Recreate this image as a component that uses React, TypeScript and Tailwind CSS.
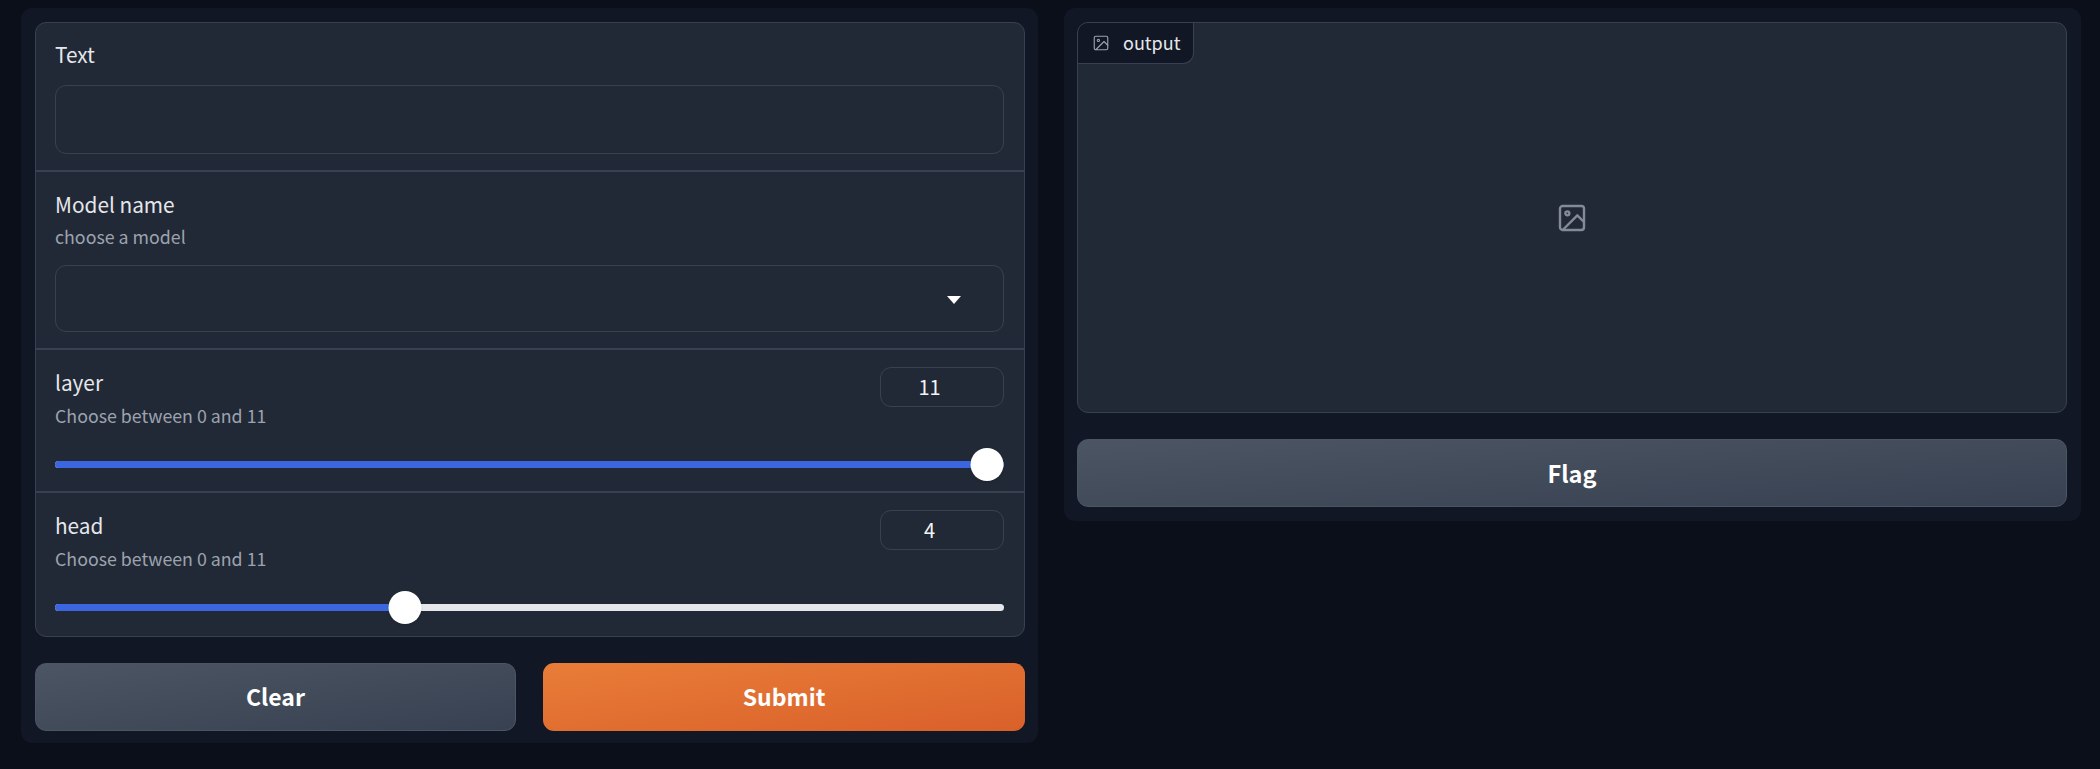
import React from "react";

const FONT = "font-['Noto_Sans_CJK_SC','Noto_Sans',sans-serif]";

const ImageIcon = ({ className, strokeWidth }: { className: string; strokeWidth: number }) => (
  <svg
    className={className}
    viewBox="0 0 24 24"
    fill="none"
    stroke="currentColor"
    strokeWidth={strokeWidth}
    strokeLinecap="round"
    strokeLinejoin="round"
  >
    <rect x="3" y="3" width="18" height="18" rx="2" ry="2" />
    <circle cx="8.5" cy="8.5" r="1.5" />
    <polyline points="21 15 16 10 5 21" />
  </svg>
);

const SliderRow = ({
  label,
  value,
  percent,
  height,
  border,
}: {
  label: string;
  value: number;
  percent: number;
  height: string;
  border: boolean;
}) => (
  <div className={`${height} ${border ? "border-b-2 border-[#374151]" : ""} pl-[19px] pr-[20px] pt-[17px]`}>
    <div className="flex justify-between">
      <div>
        <div className="text-[20.8px] leading-[30px] text-[#e5e7eb]">{label}</div>
        <div className="mt-[5px] text-[17.8px] leading-[26px] text-[#9ca3af]">
          Choose between 0 and 11
        </div>
      </div>
      <div className="flex h-[40px] w-[124px] items-center justify-center rounded-[11px] border border-[#374151] pr-[25px] text-[20px] text-[#f3f4f6]">
        {value}
      </div>
    </div>
    <div className="relative mt-[33px] h-[7px] rounded-full bg-[#e5e7eb]">
      <div className="h-full rounded-full bg-[#3b66e0]" style={{ width: `${percent}%` }} />
      <div
        className="absolute top-[-13px] h-[33px] w-[33px] -translate-x-1/2 rounded-full bg-white shadow"
        style={{ left: `calc(16px + (100% - 33px) * ${percent / 100})` }}
      />
    </div>
  </div>
);

export default function App() {
  return (
    <div className={`${FONT} flex h-[769px] w-[2100px] items-start gap-[26px] bg-[#0b0f19] pl-[21px] pr-[19px] pt-[8px]`}>
      {/* left column */}
      <div className="flex h-[735px] w-[1017px] flex-col gap-[26px] rounded-[11px] bg-[#111724] pb-[12px] pl-[14px] pr-[13px] pt-[14px]">
        <div className="flex h-[615px] shrink-0 flex-col overflow-hidden rounded-[11px] border border-[#374151] bg-[#222936]">
          <div className="h-[149px] border-b-2 border-[#374151] pl-[19px] pr-[20px] pt-[16px]">
            <div className="text-[20.8px] leading-[30px] text-[#e5e7eb]">Text</div>
            <div className="mt-[16px] h-[69px] rounded-[11px] border border-[#374151]" />
          </div>
          <div className="h-[178px] border-b-2 border-[#374151] pl-[19px] pr-[20px] pt-[17px]">
            <div className="text-[20.8px] leading-[30px] text-[#e5e7eb]">Model name</div>
            <div className="mt-[4px] text-[17.8px] leading-[26px] text-[#9ca3af]">choose a model</div>
            <div className="mt-[16px] flex h-[67px] items-center justify-end rounded-[11px] border border-[#374151] pr-[42px] pt-[2px]">
              <div className="h-0 w-0 border-x-[7px] border-t-[8px] border-x-transparent border-t-white" />
            </div>
          </div>
          <SliderRow label="layer" value={11} percent={100} height="h-[143px]" border />
          <SliderRow label="head" value={4} percent={36.5} height="flex-1" border={false} />
        </div>
        <div className="flex gap-[27px]">
          <button className="h-[68px] w-[481px] rounded-[11px] border border-[#4b5563] bg-gradient-to-br from-[#4b5563] to-[#374151] pb-[1px] text-[23px] font-semibold text-white">
            Clear
          </button>
          <button className="h-[68px] flex-1 rounded-[11px] bg-gradient-to-br from-[#e97d38] to-[#d9602a] pb-[1px] text-[23px] font-semibold text-white">
            Submit
          </button>
        </div>
      </div>

      {/* right column */}
      <div className="flex h-[513px] w-[1017px] flex-col gap-[26px] rounded-[11px] bg-[#111724] pb-[14px] pl-[13px] pr-[14px] pt-[14px]">
        <div className="h-[391px] shrink-0 overflow-hidden rounded-[11px] border border-[#374151] bg-[#222936]">
          <div className="flex h-[41px] w-[116px] items-center gap-[13px] rounded-br-[11px] border-b border-r border-[#374151] bg-[#111724] pl-[14px] text-[18px] text-[#e5e7eb]">
            <ImageIcon className="h-[18px] w-[18px] text-[#9ca3af]" strokeWidth={1.5} />
            <span className="pb-[2px]">output</span>
          </div>
          <div className="flex h-[348px] items-center justify-center pb-[40px]">
            <ImageIcon className="h-[32px] w-[32px] text-[#858a98]" strokeWidth={1.8} />
          </div>
        </div>
        <button className="h-[68px] shrink-0 rounded-[11px] border border-[#4b5563] bg-gradient-to-br from-[#4b5563] to-[#374151] pt-[1px] text-[23.5px] font-semibold text-white">
          Flag
        </button>
      </div>
    </div>
  );
}
